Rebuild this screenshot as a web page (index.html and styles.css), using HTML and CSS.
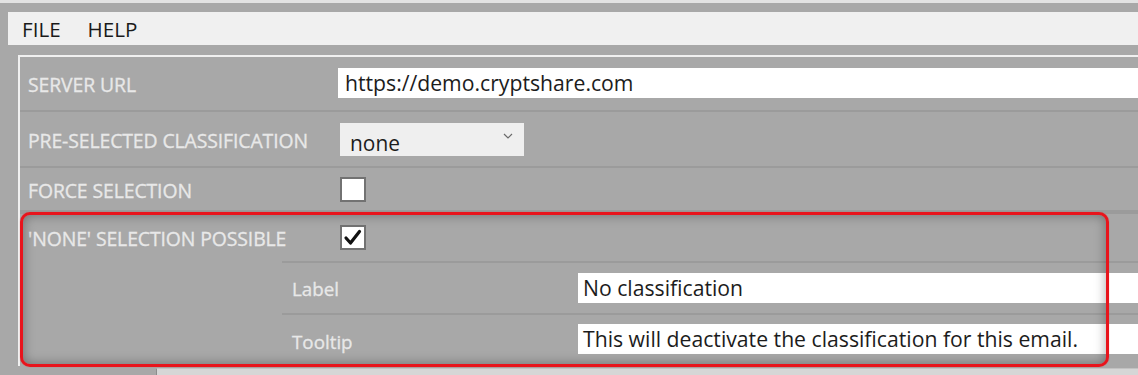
FILE: index.html
```html
<!DOCTYPE html>
<html>
<head>
<meta charset="utf-8">
<link rel="stylesheet" href="styles.css">
</head>
<body>
<div class="topline"></div>
<div class="menubar"><span class="menu">FILE</span><span class="menu">HELP</span></div>
<div class="panel">
  <div class="row r1">
    <div class="label">SERVER URL</div>
    <div class="value"><div class="text">https://demo.cryptshare.com</div></div>
  </div>
  <div class="row r2">
    <div class="label">PRE-SELECTED CLASSIFICATION</div>
    <div class="value">
      <div class="select"><span class="sel-text">none</span>
        <svg class="chev" width="10" height="6" viewBox="0 0 10 6"><path d="M1 1 L5 5 L9 1" fill="none" stroke="#6a6a6a" stroke-width="1.2"/></svg>
      </div>
    </div>
  </div>
  <div class="row r3">
    <div class="label">FORCE SELECTION</div>
    <div class="value"><div class="check"></div></div>
  </div>
  <div class="group">
    <div class="row r4">
      <div class="label">'NONE' SELECTION POSSIBLE</div>
      <div class="value"><div class="check">
        <svg width="22" height="20" viewBox="0 0 22 20"><path d="M4 10 L8.5 15 L17.5 3.5" fill="none" stroke="#111" stroke-width="3.2" stroke-linecap="round" stroke-linejoin="round"/></svg>
      </div></div>
    </div>
    <div class="sub">
      <div class="subrow s1">
        <div class="sublabel">Label</div>
        <div class="text">No classification</div>
      </div>
      <div class="subrow s2">
        <div class="sublabel">Tooltip</div>
        <div class="text">This will deactivate the classification for this email.</div>
      </div>
    </div>
    <div class="highlight"></div>
  </div>
</div>
<div class="bottom"><div class="bottom-box"></div></div>
</body>
</html>
```
FILE: styles.css
```css
html, body {
  margin: 0;
  padding: 0;
}
body {
  width: 1138px;
  height: 375px;
  overflow: hidden;
  background: #a8a8a8;
  font-family: "Open Sans", "Noto Sans", sans-serif;
}
.topline {
  height: 3px;
  background: #e2e2e2;
  margin-bottom: 9px;
}
.menubar {
  margin-left: 8px;
  height: 33px;
  background: #f0f0f0;
  display: flex;
  align-items: center;
  padding-left: 14px;
  gap: 27px;
  font-size: 20.6px;
  color: #1a1a1a;
}
.menu {
  padding-top: 1px;
}
.panel {
  margin-top: 10px;
  margin-left: 18px;
  border-top: 2px solid #f0f0f0;
  border-left: 2px solid #f0f0f0;
  height: 309px;
}
.row {
  display: flex;
  align-items: center;
  border-bottom: 2px solid #9b9b9b;
}
.r1 { height: 53px; }
.r2 { height: 54px; }
.r3 { height: 42px; }
.r4 { height: 47px; border-bottom: none; }
.label {
  width: 310px;
  padding-left: 8px;
  color: #e8e8e8;
  -webkit-text-stroke: 0.3px #e8e8e8;
  font-size: 19.4px;
  padding-top: 2px;
  white-space: nowrap;
  letter-spacing: -0.1px;
}
.value {
  flex: 1;
  display: flex;
  align-items: center;
}
.text {
  flex: 1;
  height: 30px;
  background: #ffffff;
  color: #1c1c1c;
  font-size: 21.2px;
  line-height: 30px;
  padding-left: 7px;
  white-space: nowrap;
  overflow: hidden;
}
.r1 .text {
  margin-top: -1px;
}
.select {
  margin-left: 2px;
  width: 184px;
  height: 33px;
  background: #efefef;
  display: flex;
  align-items: center;
  justify-content: space-between;
  padding: 0 11px 0 10px;
  box-sizing: border-box;
}
.sel-text {
  font-size: 20.9px;
  color: #1c1c1c;
  padding-top: 8px;
}
.chev {
  margin-top: -6px;
}
.check {
  margin-left: 2px;
  width: 22px;
  height: 21px;
  background: #ffffff;
  border: 2px solid #727272;
  display: flex;
  align-items: center;
  justify-content: center;
}
.group {
  position: relative;
  border-top: 2px solid #9b9b9b;
}
.sub {
  margin-left: 262px;
}
.subrow {
  display: flex;
  align-items: center;
  border-top: 2px solid #9b9b9b;
}
.s1 { height: 50px; }
.s2 { height: 51px; }
.sublabel {
  width: 286px;
  padding-left: 10px;
  color: #e8e8e8;
  -webkit-text-stroke: 0.3px #e8e8e8;
  font-size: 18.8px;
  padding-top: 2px;
}
.sub .text {
  padding-left: 5px;
}
.s2 .text {
  margin-top: -3px;
}
.highlight {
  position: absolute;
  left: 0;
  top: -2px;
  width: 1089px;
  height: 155px;
  box-sizing: border-box;
  border: 3px solid #e8141c;
  border-radius: 10px;
  box-shadow: inset 0 0 12px rgba(0, 0, 0, 0.35), 0 0 1px rgba(232, 20, 28, 0.6);
  pointer-events: none;
}
.bottom {
  height: 9px;
  display: flex;
}
.bottom-box {
  margin-left: 156px;
  margin-top: 2px;
  flex: 1;
  background: #d6d6d6;
  border-left: 1px solid #8c8c8c;
  border-top: 1px solid #c2c2c2;
}
```
